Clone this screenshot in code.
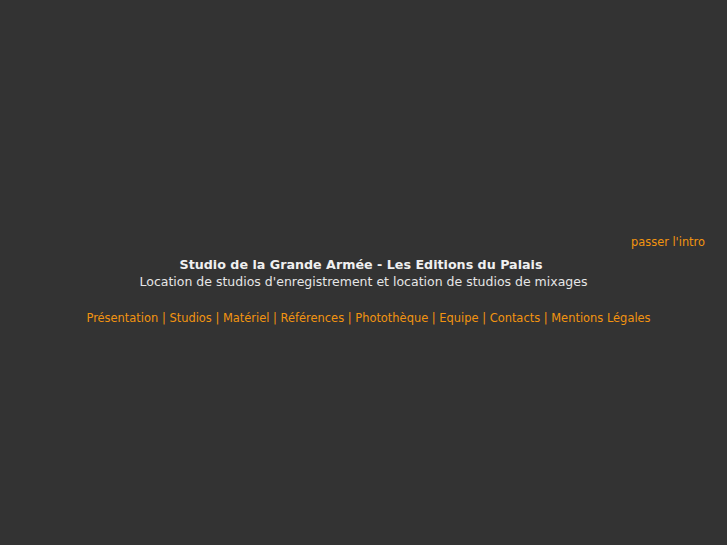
const links = [
  "Présentation",
  "Studios",
  "Matériel",
  "Références",
  "Photothèque",
  "Equipe",
  "Contacts",
  "Mentions Légales",
];

export default function App() {
  return (
    <div className="min-h-screen bg-[#333333] font-['DejaVu_Sans',sans-serif] overflow-hidden">
      <div className="h-[234px]" />
      <div className="text-right pr-[22px] text-[11.4px] leading-[16px]">
        <a href="#" className="text-[#f29410]">
          passer l'intro
        </a>
      </div>
      <div className="mt-[7px] text-center">
        <h1 className="pr-[5px] text-[12.7px] leading-[16px] font-bold text-[#f0f0f0]">
          Studio de la Grande Armée - Les Editions du Palais
        </h1>
        <p className="text-[12.5px] leading-[18px] text-[#e6e6e6]">
          Location de studios d'enregistrement et location de studios de mixages
        </p>
      </div>
      <nav className="mt-[19px] pl-[10px] text-center text-[11.45px] leading-[16px] text-[#f29410]">
        {links.map((l, i) => (
          <span key={l}>
            {i > 0 && " | "}
            <a href="#">{l}</a>
          </span>
        ))}
      </nav>
    </div>
  );
}
